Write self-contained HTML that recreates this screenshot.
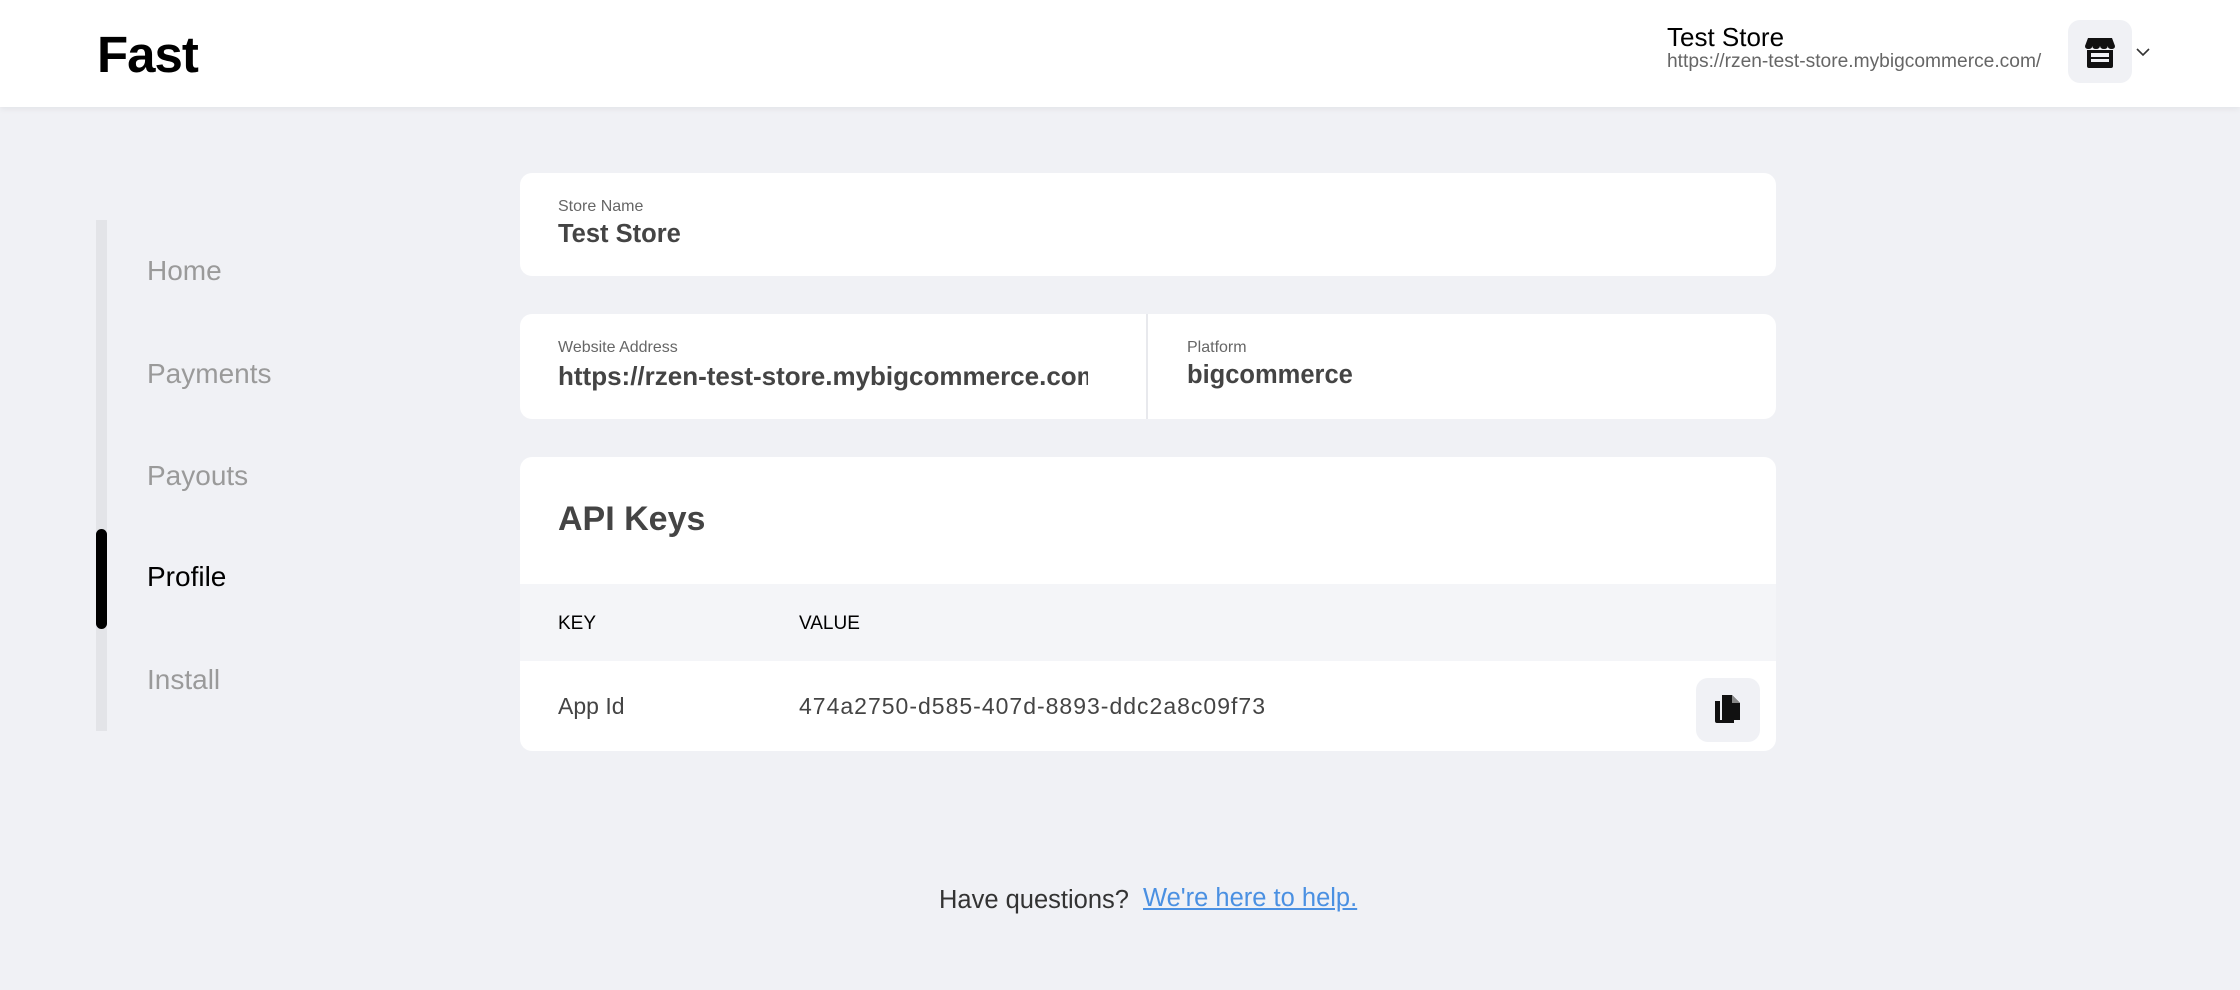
<!DOCTYPE html>
<html><head><meta charset="utf-8"><style>
*{box-sizing:border-box;margin:0;padding:0}
body{width:2240px;height:990px;background:#f0f1f5;font-family:"Liberation Sans",Arial,sans-serif;position:relative;overflow:hidden}
.a{position:absolute}
.hdr{left:0;top:0;width:2240px;height:107px;background:#fff;box-shadow:0 2px 6px rgba(0,0,0,0.06)}
.card{background:#fff;border-radius:12px;position:absolute;left:520px;width:1256px;overflow:hidden}
.lbl{font-size:16px;color:#666}
.val{font-size:25.5px;font-weight:bold;color:#444}
.nav{left:147px;font-size:28px;color:#9a9a9a;line-height:32px}
</style></head><body>
<div class="a hdr"></div>
<div class="a" style="left:97px;top:25px;font-size:51px;font-weight:bold;color:#000;letter-spacing:-1px">Fast</div>
<div class="a" style="left:1667px;top:22px;font-size:26px;color:#000">Test Store</div>
<div class="a" style="left:1667px;top:51px;font-size:19.2px;color:#666">https://rzen-test-store.mybigcommerce.com/</div>
<div class="a" style="left:2068px;top:20px;width:64px;height:63px;background:#f0f1f5;border-radius:12px"></div>
<svg class="a" style="left:2084px;top:36px" width="32" height="34" viewBox="0 0 32 34">
<path d="M4 2h24l3 8q0 3-3.5 3q-3.5 0-3.75-3q-.25 3-3.75 3t-4-3q-.5 3-4 3t-3.75-3q-.25 3-3.75 3T1 10z" fill="#111"/>
<path d="M3 14h26v16a2 2 0 0 1-2 2H5a2 2 0 0 1-2-2z" fill="#111"/>
<rect x="7" y="17" width="18" height="9" fill="#f0f1f5"/><rect x="7" y="21" width="18" height="2" fill="#111"/>
</svg>
<svg class="a" style="left:2136px;top:47px" width="14" height="10" viewBox="0 0 14 10"><path d="M1 2l6 6 6-6" stroke="#333" stroke-width="1.6" fill="none"/></svg>

<div class="a" style="left:96px;top:220px;width:11px;height:511px;background:#e3e4e8"></div>
<div class="a" style="left:96px;top:529px;width:11px;height:100px;background:#000;border-radius:6px"></div>
<div class="a nav" style="top:255px">Home</div>
<div class="a nav" style="top:358px">Payments</div>
<div class="a nav" style="top:460px">Payouts</div>
<div class="a nav" style="top:561px;color:#000">Profile</div>
<div class="a nav" style="top:664px">Install</div>

<div class="card" style="top:173px;height:103px">
<div class="a lbl" style="left:38px;top:25px">Store Name</div>
<div class="a val" style="left:38px;top:47px">Test Store</div>
</div>
<div class="card" style="top:314px;height:105px">
<div class="a lbl" style="left:38px;top:25px">Website Address</div>
<div class="a val" style="left:38px;top:47px;width:530px;overflow:hidden;white-space:nowrap;font-size:26px">https://rzen-test-store.mybigcommerce.com/</div>
<div class="a" style="left:626px;top:0;width:2px;height:105px;background:#e8e9ed"></div>
<div class="a lbl" style="left:667px;top:25px">Platform</div>
<div class="a val" style="left:667px;top:47px">bigcommerce</div>
</div>
<div class="card" style="top:457px;height:294px">
<div class="a" style="left:38px;top:43px;font-size:34px;font-weight:bold;color:#444">API Keys</div>
<div class="a" style="left:0;top:127px;width:1256px;height:77px;background:#f4f5f8"></div>
<div class="a" style="left:38px;top:156px;font-size:19px;color:#000">KEY</div>
<div class="a" style="left:279px;top:156px;font-size:19px;color:#000">VALUE</div>
<div class="a" style="left:38px;top:236px;font-size:23px;color:#444">App Id</div>
<div class="a" style="left:279px;top:236px;font-size:23px;color:#444;letter-spacing:1px">474a2750-d585-407d-8893-ddc2a8c09f73</div>
<div class="a" style="left:1176px;top:221px;width:64px;height:64px;background:#f0f1f5;border-radius:12px"></div>
<svg class="a" style="left:1194px;top:237px" width="28" height="30" viewBox="0 0 28 30">
<path d="M1 7h5v19h14v3H3a2 2 0 0 1-2-2z" fill="#111"/>
<path d="M8 1h10l8 8v17H8z" fill="#111"/><path d="M18 1v8h8" fill="#888"/>
</svg>
</div>
<div class="a" style="left:939px;top:886px;font-size:25.5px;color:#333">Have questions?</div>
<div class="a" style="left:1143px;top:884px;font-size:25.5px;color:#4a90e2;text-decoration:underline">We're here to help.</div>
</body></html>
